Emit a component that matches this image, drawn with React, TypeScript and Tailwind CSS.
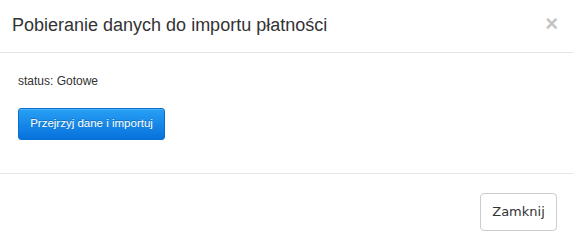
import React from 'react';

export default function App() {
  return (
    <div className="w-[573px] h-[244px] bg-white flex flex-col font-['Liberation_Sans',Arial,sans-serif] text-[#333]">
      <div className="h-[53px] border-b border-[#e5e5e5] flex items-center justify-between pl-[12px] pr-[15px]">
        <h4 className="text-[18px] leading-[20px] text-[#333] mt-[-2px]">Pobieranie danych do importu płatności</h4>
        <button className="text-[22px] leading-none font-bold text-[#c4c4c4] mt-[-4px]">×</button>
      </div>
      <div className="h-[121px] border-b border-[#e5e5e5] px-[18px] pt-[20px]">
        <p className="text-[12px] leading-[16px]">status: Gotowe</p>
        <button className="mt-[19px] w-[147px] h-[32px] rounded-[3px] border border-[#0a6fd0] bg-gradient-to-b from-[#27a0f5] to-[#0771dc] text-white text-[11.5px] [text-shadow:0_-1px_0_rgba(0,0,0,0.25)] shadow-[inset_0_1px_0_rgba(255,255,255,0.2)]">
          Przejrzyj dane i importuj
        </button>
      </div>
      <div className="flex-1 flex justify-end items-start pt-[19px] pr-[16px]">
        <button className="w-[77px] h-[38px] rounded-[4px] border border-[#ccc] bg-white text-[#333] text-[13px] font-['DejaVu_Sans',Verdana,sans-serif]">
          Zamknij
        </button>
      </div>
    </div>
  );
}
